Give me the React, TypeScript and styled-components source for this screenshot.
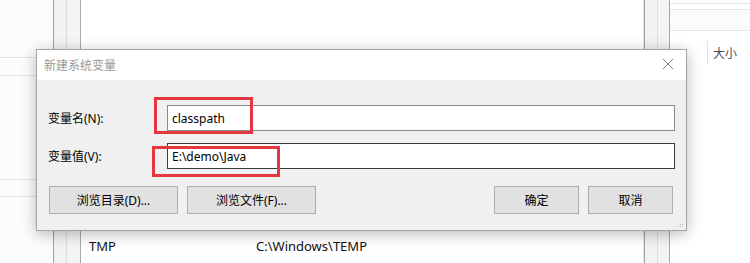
import styled, { createGlobalStyle } from "styled-components";

const GlobalStyle = createGlobalStyle`
  body {
    margin: 0;
    font-family: "Noto Sans", "Noto Sans CJK SC", sans-serif;
    font-size: 12px;
    color: #000;
    background: #fff;
  }
`;

type EnvVar = { name: string; value: string };

const hiddenRows: EnvVar[] = [
  { name: "TEMP", value: "C:\\Windows\\TEMP" },
  { name: "TMP", value: "C:\\Windows\\TEMP" },
];

// gaps between the faint lines of the left pane
const paneLines = [57, 17, 103, 16];

function CloseIcon() {
  return (
    <svg width="12" height="12" viewBox="0 0 12 12">
      <path d="M1 1 L11 11 M11 1 L1 11" stroke="#7a7a7a" strokeWidth="1" fill="none" />
    </svg>
  );
}

function Grip() {
  return (
    <svg width="8" height="8" viewBox="0 0 8 8">
      <rect x="6" y="2" width="1" height="1" fill="#bbb" />
      <rect x="4" y="4" width="1" height="1" fill="#bbb" />
      <rect x="6" y="4" width="1" height="1" fill="#bbb" />
      <rect x="2" y="6" width="1" height="1" fill="#bbb" />
      <rect x="4" y="6" width="1" height="1" fill="#bbb" />
      <rect x="6" y="6" width="1" height="1" fill="#bbb" />
    </svg>
  );
}

function App() {
  return (
    <>
      <GlobalStyle />
      <StDesktop>
        <StLeftPane>
          {paneLines.map((gap, i) => (
            <StPaneLine key={i} $top={gap} />
          ))}
        </StLeftPane>
        <StStrip />
        <StMainPane>
          <StList>
            {hiddenRows.map((row) => (
              <StListRow key={row.name}>
                <StNameCell>{row.name}</StNameCell>
                <StValueCell>{row.value}</StValueCell>
              </StListRow>
            ))}
          </StList>
        </StMainPane>
        <StStrip $narrow />
        <StRightPane>
          <StTopBand />
          <StMidBand />
          <StColumnHeader>
            <StDivider />
            <span>大小</span>
          </StColumnHeader>
        </StRightPane>

        <StDialog>
          <StTitleBar>
            <StTitle>新建系统变量</StTitle>
            <StCloseButton>
              <CloseIcon />
            </StCloseButton>
          </StTitleBar>
          <StBody>
            <StFieldRow>
              <StLabel>变量名(N):</StLabel>
              <StInput>classpath</StInput>
            </StFieldRow>
            <StFieldRow $gap>
              <StLabel>变量值(V):</StLabel>
              <StInput $dark>E:\demo\Java</StInput>
            </StFieldRow>
            <StButtonRow>
              <StButtonGroup>
                <StButton $wide>浏览目录(D)...</StButton>
                <StButton $wide>浏览文件(F)...</StButton>
              </StButtonGroup>
              <StButtonGroup>
                <StButton>确定</StButton>
                <StButton>取消</StButton>
              </StButtonGroup>
            </StButtonRow>
          </StBody>
          <StGrip>
            <Grip />
          </StGrip>
          <StMark $left={117} $top={47} $w={99} $h={37} />
          <StMark $left={115} $top={96} $w={128} $h={31} />
        </StDialog>
      </StDesktop>
    </>
  );
}
export default App;

const StDesktop = styled.div`
  position: relative;
  width: 750px;
  height: 263px;
  overflow: hidden;
  display: flex;
  background: #fff;
`;
const StLeftPane = styled.div`
  width: 53px;
  background: #fcfcfc;
`;
const StPaneLine = styled.div<{ $top: number }>`
  margin-top: ${(p) => p.$top}px;
  height: 1px;
  background: #e3e3e3;
`;
const StStrip = styled.div<{ $narrow?: boolean }>`
  width: ${(p) => (p.$narrow ? 24 : 26)}px;
  background: linear-gradient(
    to right,
    #f2f2f2 0,
    #f2f2f2 12px,
    #dcdcdc 12px,
    #dcdcdc 13px,
    #f4f4f4 13px
  );
  border-left: 1px solid #a0a0a0;
  border-right: 1px solid #a8a8a8;
`;
const StMainPane = styled.div`
  flex: 1;
  display: flex;
  flex-direction: column;
  justify-content: flex-end;
  background: #fff;
  border-right: 1px solid #e6e6e6;
`;
const StList = styled.div`
  display: flex;
  flex-direction: column;
  padding-bottom: 6px;
`;
const StListRow = styled.div`
  display: flex;
  align-items: center;
  height: 22px;
  font-size: 13px;
  color: #111;
`;
const StNameCell = styled.div`
  width: 167px;
  padding-left: 8px;
`;
const StValueCell = styled.div`
  flex: 1;
`;
const StRightPane = styled.div`
  width: 80px;
  display: flex;
  flex-direction: column;
  background: #fff;
`;
const StTopBand = styled.div`
  margin-top: 3px;
  height: 5px;
  border-top: 1px solid #e4e4e4;
  border-bottom: 1px solid #e4e4e4;
`;
const StMidBand = styled.div`
  height: 20px;
  background: #fbfbfb;
  border-bottom: 1px solid #e4e4e4;
`;
const StColumnHeader = styled.div`
  display: flex;
  align-items: center;
  gap: 5px;
  margin-top: 10px;
  padding-left: 37px;
  height: 23px;
  font-size: 12px;
  color: #4c4c4c;
`;
const StDivider = styled.div`
  width: 1px;
  height: 23px;
  background: #e3e3e3;
`;
const StDialog = styled.div`
  position: absolute;
  left: 36px;
  top: 49px;
  width: 651px;
  height: 182px;
  box-sizing: border-box;
  border: 1px solid #a4a4a4;
  background: #f0f0f0;
  box-shadow: 0 3px 14px rgba(0, 0, 0, 0.28);
  display: flex;
  flex-direction: column;
`;
const StTitleBar = styled.div`
  height: 30px;
  display: flex;
  align-items: center;
  justify-content: space-between;
  background: #fff;
  padding: 0 8px 0 7px;
`;
const StTitle = styled.div`
  font-size: 12px;
  color: #999;
`;
const StCloseButton = styled.div`
  display: flex;
  align-items: center;
  justify-content: center;
  width: 20px;
  height: 20px;
  margin-top: -2px;
`;
const StBody = styled.div`
  flex: 1;
  display: flex;
  flex-direction: column;
  padding: 25px 11px 0 11px;
`;
const StFieldRow = styled.div<{ $gap?: boolean }>`
  display: flex;
  align-items: center;
  margin-top: ${(p) => (p.$gap ? 12 : 0)}px;
`;
const StLabel = styled.div`
  width: 119px;
  font-size: 12px;
  color: #000;
`;
const StInput = styled.div<{ $dark?: boolean }>`
  flex: 1;
  height: 26px;
  box-sizing: border-box;
  display: flex;
  align-items: center;
  padding-left: 4px;
  background: #fff;
  border: 1px solid ${(p) => (p.$dark ? "#3a3a3a" : "#8a8a8a")};
  font-size: 12px;
`;
const StButtonRow = styled.div`
  display: flex;
  justify-content: space-between;
  margin-top: 17px;
  padding-left: 1px;
  padding-right: 2px;
`;
const StButtonGroup = styled.div`
  display: flex;
  gap: 9px;
`;
const StButton = styled.div<{ $wide?: boolean }>`
  width: ${(p) => (p.$wide ? 129 : 85)}px;
  height: 28px;
  box-sizing: border-box;
  display: flex;
  align-items: center;
  justify-content: center;
  background: #e1e1e1;
  border: 1px solid #adadad;
  font-size: 12px;
  color: #000;
`;
const StGrip = styled.div`
  position: absolute;
  right: 2px;
  bottom: 2px;
  display: flex;
`;
const StMark = styled.div<{ $left: number; $top: number; $w: number; $h: number }>`
  position: absolute;
  left: ${(p) => p.$left}px;
  top: ${(p) => p.$top}px;
  width: ${(p) => p.$w}px;
  height: ${(p) => p.$h}px;
  box-sizing: border-box;
  border: 3px solid #e5373d;
`;
